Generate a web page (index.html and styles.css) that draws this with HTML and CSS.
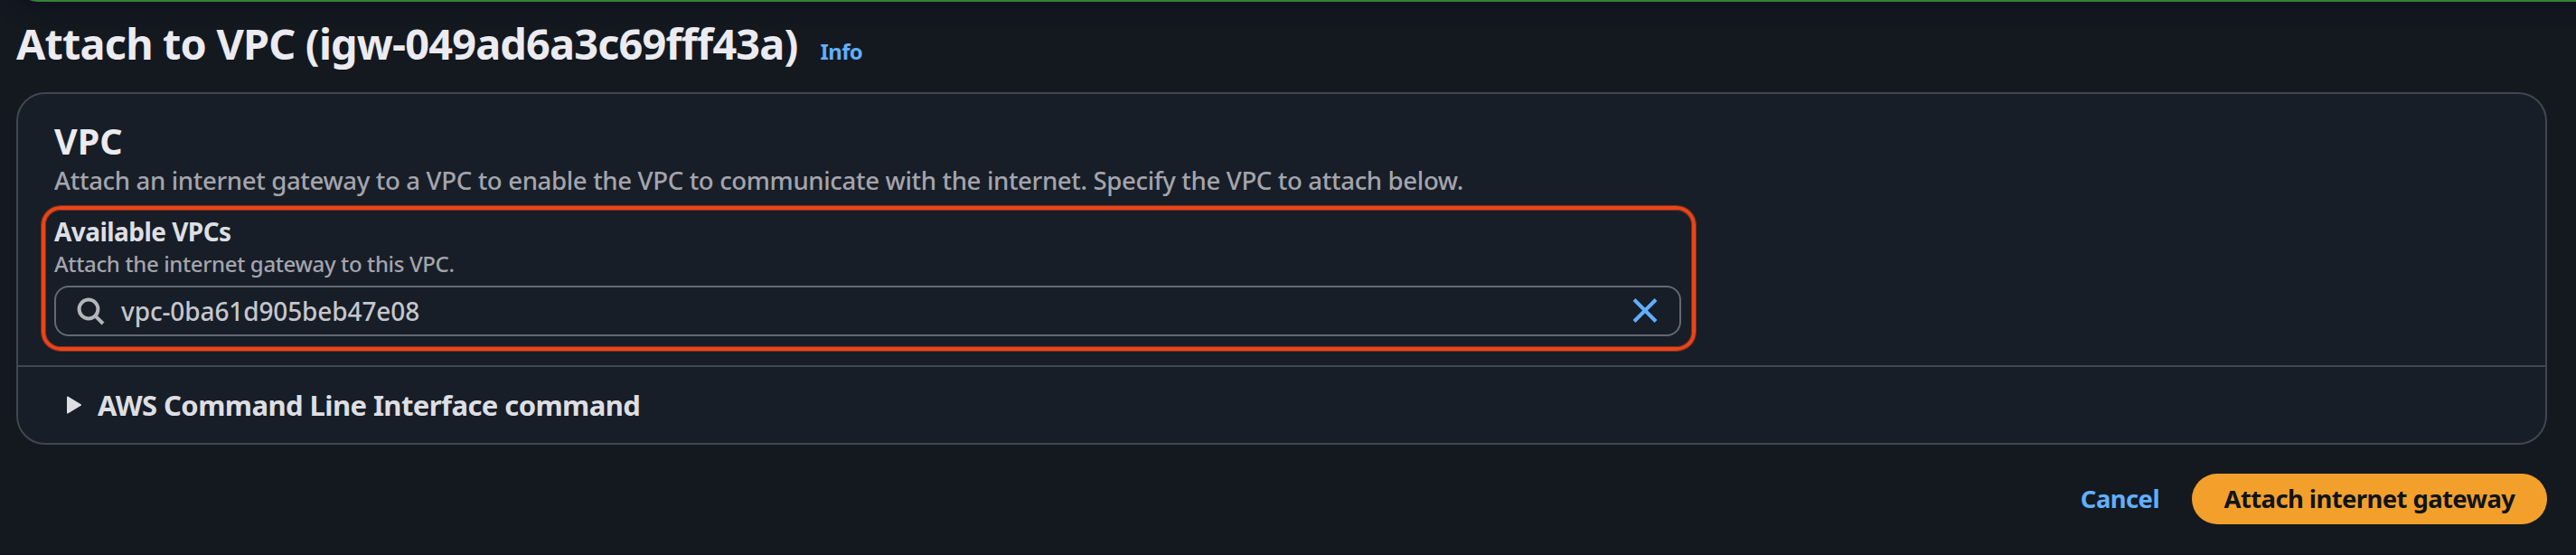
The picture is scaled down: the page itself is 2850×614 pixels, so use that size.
FILE: index.html
```
<!DOCTYPE html>
<html lang="en">
<head>
<meta charset="utf-8">
<title>Attach to VPC</title>
<link rel="stylesheet" href="styles.css">
</head>
<body>
<div class="page">
  <div class="flashbar"></div>
  <header class="page-header">
    <h1 class="page-title">Attach to VPC (igw-049ad6a3c69fff43a)</h1>
    <a class="info-link">Info</a>
  </header>
  <main class="container">
    <section class="container-body">
      <h2 class="section-title">VPC</h2>
      <p class="section-description">Attach an internet gateway to a VPC to enable the VPC to communicate with the internet. Specify the VPC to attach below.</p>
      <div class="field field-highlight">
        <label class="field-label">Available VPCs</label>
        <p class="field-hint">Attach the internet gateway to this VPC.</p>
        <div class="search-input">
          <svg class="icon-search" width="32" height="32" viewBox="0 0 32 32"><circle cx="14" cy="14" r="10.4"/><path d="M21.3 21.3 30 30"/></svg>
          <span class="search-value">vpc-0ba61d905beb47e08</span>
          <svg class="icon-close" width="32" height="32" viewBox="0 0 32 32"><path d="M4 3.5 28 27.5M28 3.5 4 27.5"/></svg>
        </div>
      </div>
    </section>
    <section class="expandable">
      <svg class="icon-caret" width="16" height="20" viewBox="0 0 16 20"><path d="M1 1.6 15 10 1 18.4Z"/></svg>
      <span class="expandable-title">AWS Command Line Interface command</span>
    </section>
  </main>
  <footer class="actions">
    <a class="cancel">Cancel</a>
    <button class="primary">Attach internet gateway</button>
  </footer>
</div>
</body>
</html>
```
FILE: styles.css
```
* { box-sizing: border-box; }

body {
  margin: 0;
  background: #141920;
  color: #ebebf0;
  font-family: "Noto Sans", "Open Sans", sans-serif;
  font-weight: 500;
}

h1, h2, p { margin: 0; }

.page {
  height: 614px;
  padding: 0 32px 0 18px;
  overflow: hidden;
  border-bottom: 1px solid #120f19;
}

.flashbar {
  height: 60px;
  margin: -58px -72px 0 0;
  border-radius: 24px;
  background: #348432;
  box-shadow: 0 0 24px 2px #0b0e1c;
}

.page-header {
  display: flex;
  align-items: baseline;
  gap: 25px;
  height: 60px;
  margin-top: 16px;
}

.page-title {
  font-size: 46.8px;
  font-weight: 700;
  line-height: 60px;
  letter-spacing: -0.81px;
}

.info-link {
  color: #61affe;
  font-size: 24px;
  font-weight: 700;
  line-height: 32px;
  letter-spacing: -0.7px;
}

.container {
  margin-top: 24px;
  border: 2px solid #424650;
  border-radius: 32px;
  background: #171e27;
}

.container-body {
  padding: 29px 40px 16px;
  border-bottom: 2px solid #424650;
}

.section-title {
  font-size: 39.5px;
  font-weight: 700;
  line-height: 46px;
}

.section-description {
  color: #a4a4ad;
  font-size: 27.6px;
  line-height: 40px;
  letter-spacing: -0.36px;
}

.field-highlight {
  width: 1830px;
  margin: 9px 0 0 -14px;
  padding: 8px 12px 12px 10px;
  border: 4px solid #eb4419;
  border-radius: 21px;
  box-shadow: 0 0 0 1px #81311f, inset 0 0 0 1px #81311f;
}

.field-label {
  display: block;
  color: #dedee3;
  font-size: 28px;
  font-weight: 700;
  line-height: 32px;
  letter-spacing: -0.55px;
}

.field-hint {
  margin-top: 4px;
  color: #a4a4ad;
  font-size: 24px;
  line-height: 32px;
  letter-spacing: -0.36px;
}

.search-input {
  display: flex;
  align-items: center;
  width: 1800px;
  height: 56px;
  margin-top: 8px;
  padding: 0 22px;
  border: 2px solid #656871;
  border-radius: 16px;
}

.icon-search {
  fill: none;
  stroke: #b4b4bb;
  stroke-width: 4;
}

.search-value {
  flex: 1;
  margin-left: 18px;
  color: #c6c6cd;
  font-size: 28px;
  line-height: 40px;
  letter-spacing: -0.12px;
}

.icon-close {
  fill: none;
  stroke: #61affe;
  stroke-width: 4;
}

.expandable {
  display: flex;
  align-items: center;
  gap: 18px;
  height: 84px;
  padding-left: 54px;
}

.icon-caret {
  fill: #dedee3;
  stroke: #dedee3;
  stroke-width: 2;
  stroke-linejoin: round;
}

.expandable-title {
  color: #dedee3;
  font-size: 31px;
  font-weight: 700;
  line-height: 40px;
  letter-spacing: -0.58px;
}

.actions {
  display: flex;
  align-items: center;
  justify-content: flex-end;
  gap: 36px;
  margin-top: 32px;
}

.cancel {
  color: #61affe;
  font-size: 27.4px;
  font-weight: 700;
  line-height: 40px;
  letter-spacing: -0.55px;
}

.primary {
  width: 393px;
  height: 56px;
  padding: 0;
  border: 0;
  border-radius: 28px;
  background: #f2a02b;
  color: #0f141a;
  font-family: inherit;
  font-size: 27.4px;
  font-weight: 700;
  line-height: 40px;
  letter-spacing: -0.56px;
}
```
